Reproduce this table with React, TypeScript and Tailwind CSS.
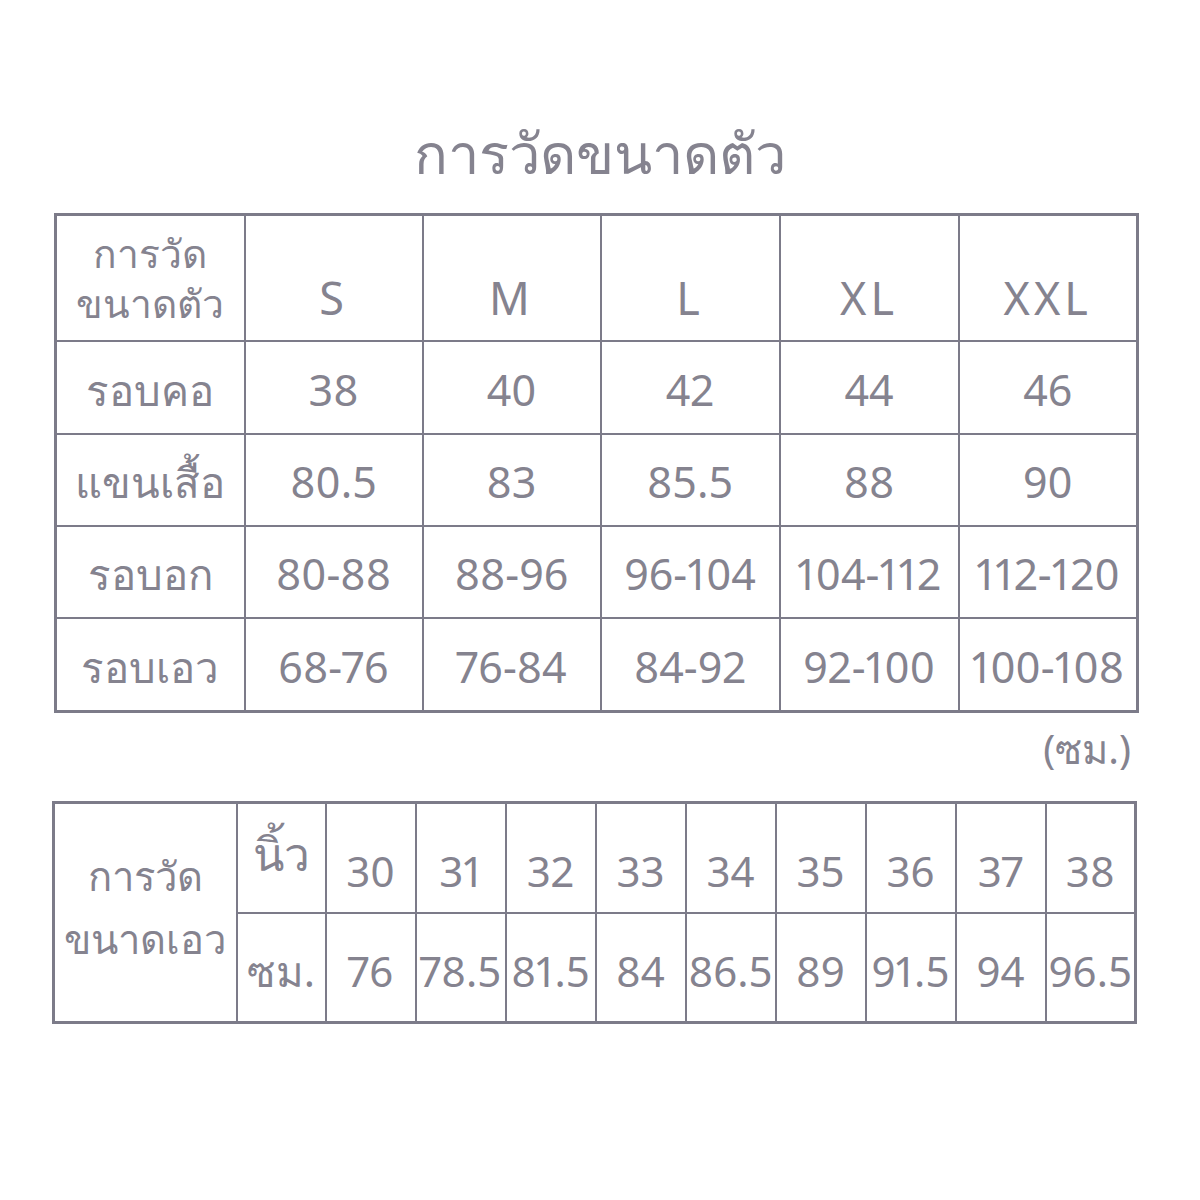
const sizes = ['S', 'M', 'L', 'XL', 'XXL'];

const bodyRows = [
  { label: 'รอบคอ', values: ['38', '40', '42', '44', '46'], h: 'h-[93px]' },
  { label: 'แขนเสื้อ', values: ['80.5', '83', '85.5', '88', '90'], h: 'h-[92px]' },
  { label: 'รอบอก', values: ['80-88', '88-96', '96-104', '104-112', '112-120'], h: 'h-[92px]' },
  { label: 'รอบเอว', values: ['68-76', '76-84', '84-92', '92-100', '100-108'], h: 'h-[94px]' },
];

const inches = ['30', '31', '32', '33', '34', '35', '36', '37', '38'];
const cms = ['76', '78.5', '81.5', '84', '86.5', '89', '91.5', '94', '96.5'];

const cell = 'border-2 border-[#7c7b89] text-center align-middle p-0 whitespace-nowrap';

export default function App() {
  return (
    <div
      className="w-[1200px] h-[1200px] bg-white text-[#85838f] flex flex-col proportional-nums"
      style={{ fontFamily: '"Noto Sans", "Open Sans", "DejaVu Sans", sans-serif' }}
    >
      <h1 className="mt-[112px] h-[80px] text-center text-[56px] leading-[80px] font-normal">
        การวัดขนาดตัว
      </h1>

      <div className="mt-[21px] pl-[54px]">
        <table className="table-fixed border-collapse border-[3px] border-[#7c7b89] w-[1082px]">
          <colgroup>
            <col className="w-[189px]" />
            <col className="w-[178px]" />
            <col className="w-[178px]" />
            <col className="w-[179px]" />
            <col className="w-[179px]" />
            <col className="w-[179px]" />
          </colgroup>
          <tbody>
            <tr className="h-[126px]">
              <td className={`${cell} text-[39px] leading-[50px]`}>
                <div className="flex flex-col items-center">
                  <span>การวัด</span>
                  <span>ขนาดตัว</span>
                </div>
              </td>
              {sizes.map((s) => (
                <td key={s} className={`${cell} text-[45px] tracking-[4px] pt-[40px]`}>
                  {s}
                </td>
              ))}
            </tr>
            {bodyRows.map((r) => (
              <tr key={r.label} className={r.h}>
                <td className={`${cell} text-[42px] pt-[4px]`}>{r.label}</td>
                {r.values.map((v, i) => (
                  <td key={i} className={`${cell} text-[43px] pt-[6px]`}>
                    {v}
                  </td>
                ))}
              </tr>
            ))}
          </tbody>
        </table>
      </div>

      <div className="w-[1131px] mt-[10px] text-right text-[40px] leading-[52px]">(ซม.)</div>

      <div className="mt-[26px] pl-[52px]">
        <table className="table-fixed border-collapse border-[3px] border-[#7c7b89] w-[1084px]">
          <colgroup>
            <col className="w-[183px]" />
            <col className="w-[89px]" />
            {inches.map((n) => (
              <col key={n} className="w-[90px]" />
            ))}
          </colgroup>
          <tbody>
            <tr className="h-[110px]">
              <td rowSpan={2} className={`${cell} text-[40px] leading-[63px] pb-[12px]`}>
                <div className="flex flex-col items-center">
                  <span>การวัด</span>
                  <span>ขนาดเอว</span>
                </div>
              </td>
              <td className={`${cell} text-[46px] pb-[8px]`}>นิ้ว</td>
              {inches.map((n) => (
                <td key={n} className={`${cell} text-[42px] pt-[26px]`}>
                  {n}
                </td>
              ))}
            </tr>
            <tr className="h-[110px]">
              <td className={`${cell} text-[42px] pt-[6px]`}>ซม.</td>
              {cms.map((n) => (
                <td key={n} className={`${cell} text-[42px] pt-[6px]`}>
                  {n}
                </td>
              ))}
            </tr>
          </tbody>
        </table>
      </div>
    </div>
  );
}
